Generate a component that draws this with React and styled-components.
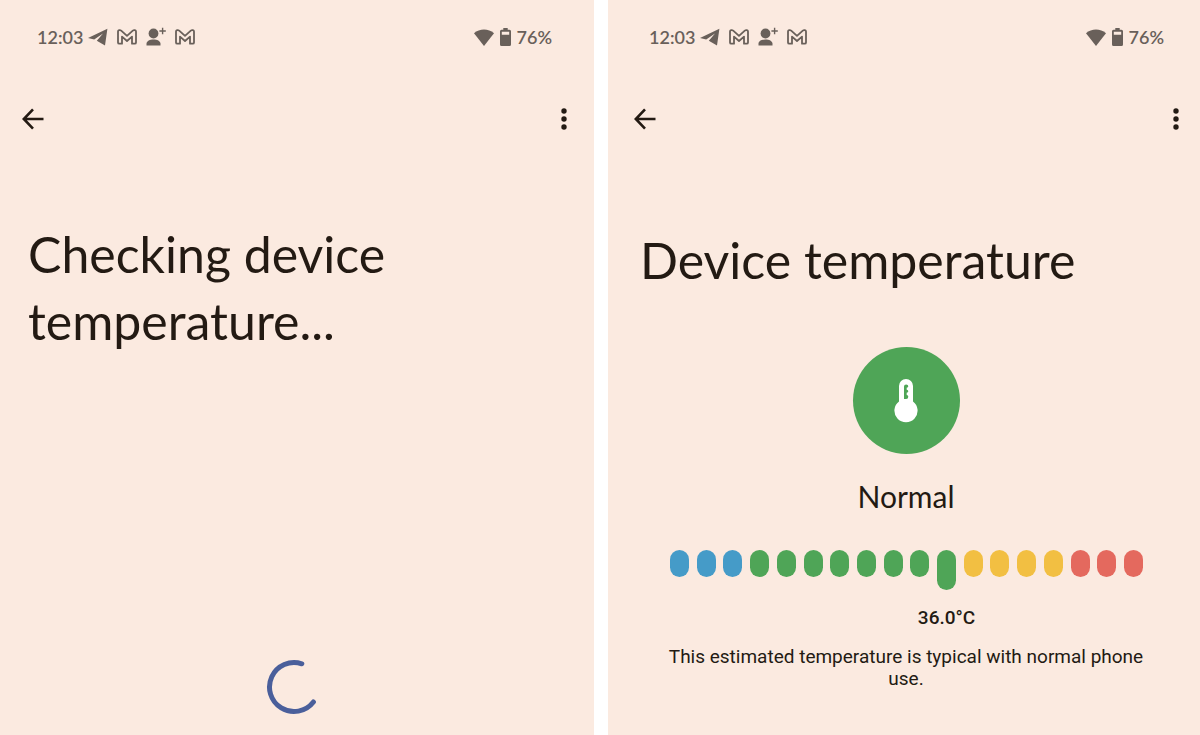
import React from 'react';
import styled, { createGlobalStyle } from 'styled-components';

const COLORS = {
  surface: '#fbeae0',
  ink: '#231a13',
  status: '#69605a',
  cold: '#459bc8',
  normal: '#4fa557',
  warm: '#f2bf42',
  hot: '#e4695e',
  spinner: '#4a5f9b',
};

const FONTS = {
  display: "Lato, 'Liberation Sans', sans-serif",
  body: "Roboto, 'Liberation Sans', sans-serif",
};

const GlobalStyle = createGlobalStyle`
  *, *::before, *::after {
    box-sizing: border-box;
  }
  body {
    margin: 0;
    background: #fff;
    color: ${COLORS.ink};
    font-family: ${FONTS.body};
  }
`;

const Screens = styled.main`
  display: grid;
  grid-template-columns: 594fr 592fr;
  gap: 14px;
  min-height: 100vh;
`;

const Screen = styled.section`
  display: flex;
  flex-direction: column;
  padding: ${({ $side }) => ($side === 'left' ? '0 6px 0 0' : '0 0 0 4px')};
  background: ${COLORS.surface};
`;

const Bar = styled.div`
  display: flex;
  align-items: center;
  justify-content: space-between;
  height: 24px;
  margin-top: 25px;
  padding: 0 36px 0 37px;
  color: ${COLORS.status};
  font-family: ${FONTS.display};
  font-size: 18px;
  font-weight: 600;
`;

const Notifications = styled.div`
  display: flex;
  align-items: center;
  gap: 9px;

  span {
    margin-right: -4px;
  }
`;

const System = styled.div`
  display: flex;
  align-items: center;
  gap: 6px;
`;

const Toolbar = styled.nav`
  display: flex;
  align-items: center;
  justify-content: space-between;
  margin-top: 54px;
  padding: 0 8px 0 17px;
`;

const IconButton = styled.button`
  display: grid;
  place-items: center;
  width: 32px;
  height: 32px;
  padding: 0;
  border: 0;
  background: none;
  color: inherit;
  cursor: pointer;
`;

const Title = styled.h1`
  margin: ${({ $top }) => $top}px 28px 0;
  font-family: ${FONTS.display};
  font-size: 50px;
  font-weight: 400;
  line-height: 67px;
`;

const SpinnerIcon = styled.svg`
  align-self: center;
  margin-top: auto;
  margin-bottom: 20px;
`;

const Badge = styled.div`
  display: grid;
  place-items: center;
  align-self: center;
  width: 107px;
  height: 107px;
  margin-top: 53px;
  border-radius: 50%;
  background: ${COLORS.normal};
`;

const Verdict = styled.h2`
  margin: 24px 0 0;
  font-family: ${FONTS.display};
  font-size: 30px;
  font-weight: 400;
  line-height: 36px;
  text-align: center;
`;

const Scale = styled.div`
  display: grid;
  grid-template-columns: repeat(18, 19px);
  justify-content: space-between;
  row-gap: 17px;
  margin: 36px 57px 0 58px;
`;

const Pill = styled.span`
  height: ${({ $active }) => ($active ? 40 : 27)}px;
  border-radius: 10px;
  background: ${({ $color }) => $color};
`;

const Reading = styled.output`
  grid-column: 10 / 13;
  font-size: 19px;
  font-weight: 500;
  line-height: 22px;
  text-align: center;
`;

const Note = styled.p`
  margin: 17px 52px 0;
  font-size: 19px;
  line-height: 22px;
  text-align: center;
`;

const TelegramIcon = () => (
  <svg width="20" height="18" viewBox="0 0 20 18" fill="currentColor">
    <path d="M19.400.8 0 10l6.200 1.600L15 5.400 8.800 12.700 17 17.400z" />
  </svg>
);

const GmailIcon = () => (
  <svg width="20" height="16" viewBox="0 0 20 16" fill="none" stroke="currentColor" strokeWidth="1.800" strokeLinejoin="round">
    <path d="M1 2.600v10.800q0 1.300 1.300 1.300H5V7.600l5 4.400 5-4.400v7.100h2.700q1.300 0 1.300-1.300V2.600C19 1 17 .6 15.800 1.600L10 6.800 4.200 1.600C3 .6 1 1 1 2.600z" />
  </svg>
);

const PersonAddIcon = () => (
  <svg width="20" height="20" viewBox="0 0 20 20" fill="currentColor">
    <circle cx="7.500" cy="6.500" r="4.900" />
    <path d="M.5 18.600v-1.800c0-2.900 3.500-4.300 7-4.300s7 1.400 7 4.300v1.800z" />
    <path d="M16.600.8v6.400M13.400 4h6.400" stroke="currentColor" strokeWidth="1.400" />
  </svg>
);

const WifiIcon = () => (
  <svg width="20" height="17" viewBox="0 0 20 17" fill="currentColor">
    <path d="M10 17 0 4.200C5.600-.6 14.400-.6 20 4.200z" />
  </svg>
);

const BatteryIcon = () => (
  <svg width="11" height="18" viewBox="0 0 11 18" fill="currentColor" fillRule="evenodd">
    <path d="M3.300 0h4.400v1.800H9.500Q11 1.800 11 3.300v13.200q0 1.500-1.500 1.500h-8Q0 18 0 16.500V3.300q0-1.500 1.500-1.500h1.800zM1.800 3.800v3h7.400v-3z" />
  </svg>
);

const BackIcon = () => (
  <svg width="22" height="22" viewBox="0 0 22 22" fill="none" stroke="currentColor" strokeWidth="2.600">
    <path d="M21.500 11H2M11 1.300 1.800 11l9.200 9.700" />
  </svg>
);

const MoreIcon = () => (
  <svg width="6" height="22" viewBox="0 0 6 22" fill="currentColor">
    <circle cx="3" cy="3" r="2.700" />
    <circle cx="3" cy="11" r="2.700" />
    <circle cx="3" cy="19" r="2.700" />
  </svg>
);

const ThermometerIcon = () => (
  <svg width="24" height="44" viewBox="0 0 24 44">
    <path
      fill="#fff"
      d="M5 7a7 7 0 0 1 14 0v15.400a11.600 11.600 0 1 1-14 0z"
    />
    <path
      fill={COLORS.normal}
      d="M10 7.600q0-2 2.100-2 2.200 0 2.200 1.600 0 1.300-1.600 1.500v2.100q1.600.2 1.600 1.500t-1.600 1.500v2.200q1.600.2 1.600 1.700 0 2.300-2.200 2.300H10z"
    />
  </svg>
);

const Spinner = () => (
  <SpinnerIcon
    width="56"
    height="56"
    viewBox="0 0 56 56"
    fill="none"
    stroke={COLORS.spinner}
    strokeWidth="5"
    strokeLinecap="round"
    role="progressbar"
    aria-label="Checking"
  >
    <path d="M35.800 4.800A24.500 24.500 0 1 0 47.400 43" />
  </SpinnerIcon>
);

const StatusBar = () => (
  <Bar>
    <Notifications>
      <span>12:03</span>
      <TelegramIcon />
      <GmailIcon />
      <PersonAddIcon />
      <GmailIcon />
    </Notifications>
    <System>
      <WifiIcon />
      <BatteryIcon />
      76%
    </System>
  </Bar>
);

const AppBar = () => (
  <Toolbar>
    <IconButton aria-label="Back">
      <BackIcon />
    </IconButton>
    <IconButton aria-label="More options">
      <MoreIcon />
    </IconButton>
  </Toolbar>
);

const ACTIVE_PILL = 10;

const PILLS = [
  ...Array(3).fill(COLORS.cold),
  ...Array(8).fill(COLORS.normal),
  ...Array(4).fill(COLORS.warm),
  ...Array(3).fill(COLORS.hot),
];

const App = () => (
  <>
    <GlobalStyle />
    <Screens>
      <Screen $side="left">
        <StatusBar />
        <AppBar />
        <Title $top={86}>
          Checking device
          <br />
          temperature...
        </Title>
        <Spinner />
      </Screen>
      <Screen $side="right">
        <StatusBar />
        <AppBar />
        <Title $top={92}>Device temperature</Title>
        <Badge>
          <ThermometerIcon />
        </Badge>
        <Verdict>Normal</Verdict>
        <Scale>
          {PILLS.map((color, i) => (
            <Pill key={i} $color={color} $active={i === ACTIVE_PILL} />
          ))}
          <Reading>36.0°C</Reading>
        </Scale>
        <Note>This estimated temperature is typical with normal phone use.</Note>
      </Screen>
    </Screens>
  </>
);

export default App;
